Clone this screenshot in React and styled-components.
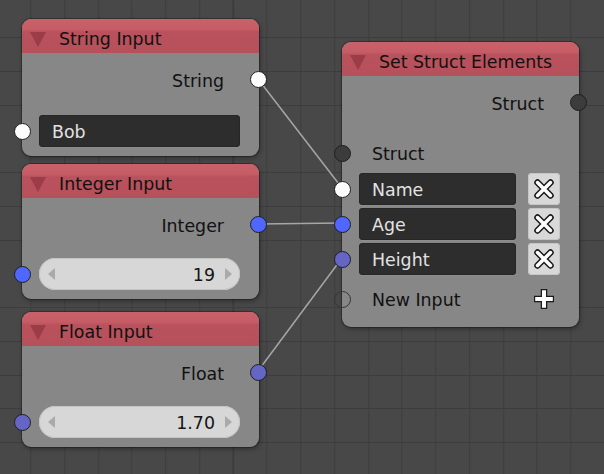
import React from "react";
import styled, { createGlobalStyle } from "styled-components";

const Global = createGlobalStyle`
  html, body {
    margin: 0;
    padding: 0;
    background: #484848;
  }
  body {
    font-family: "DejaVu Sans", "Liberation Sans", sans-serif;
  }
`;

const Canvas = styled.div`
  position: relative;
  width: 604px;
  height: 474px;
  overflow: hidden;
  background-color: #484848;
  background-image:
    repeating-linear-gradient(90deg, transparent 0, transparent 32px, #3d3d3d 32px, #3d3d3d 33px, transparent 33px, transparent 33.75px),
    repeating-linear-gradient(0deg, transparent 0, transparent 32.75px, #3d3d3d 32.75px, #3d3d3d 33.75px);
  background-position: -1.75px 0, 0 2px;
`;

const Links = styled.svg`
  position: absolute;
  left: 0;
  top: 0;
  width: 604px;
  height: 474px;
`;

const Node = styled.div`
  position: absolute;
  left: ${p => p.$x}px;
  top: ${p => p.$y}px;
  width: 237px;
  border-radius: 9px;
  background: #878787;
  box-shadow: 0 0 0 1px rgba(0, 0, 0, 0.28), 1px 2px 5px rgba(0, 0, 0, 0.35);
`;

const Header = styled.div`
  display: flex;
  align-items: center;
  gap: 13px;
  height: 34px;
  padding: 6px 0 0 8px;
  box-sizing: border-box;
  border-radius: 9px 9px 0 0;
  background: linear-gradient(#c9616b 0%, #c55c66 30%, #b9525c 38%, #b6505a 100%);
  color: #111;
  font-size: 17.4px;
`;

const Collapse = styled.span`
  width: 0;
  height: 0;
  margin-top: 1px;
  border-left: 8px solid transparent;
  border-right: 8px solid transparent;
  border-top: 15px solid #9c3c46;
`;

const Body = styled.div`
  display: flex;
  flex-direction: column;
  padding: 8px 0 ${p => p.$bottom || 9}px;
`;

const Row = styled.div`
  position: relative;
  display: flex;
  align-items: center;
  justify-content: ${p => (p.$out ? "flex-end" : "flex-start")};
  height: ${p => p.$h || 36}px;
  margin-top: ${p => p.$mt || 0}px;
  padding: ${p => (p.$out ? "0 35px 0 0" : "0 19px 0 17px")};
  gap: 12px;
  font-size: 17.4px;
  color: #111;
`;

const Label = styled.span`
  padding-left: ${p => p.$indent || 0}px;
  padding-top: ${p => (p.$right ? 4 : 1)}px;
  flex: 1;
  text-align: ${p => (p.$right ? "right" : "left")};
`;

const Socket = styled.span`
  position: absolute;
  top: 50%;
  ${p => (p.$side === "right" ? "right: -8px;" : "left: -8px;")}
  width: 17px;
  height: 17px;
  margin-top: -8.5px;
  box-sizing: border-box;
  border-radius: 50%;
  border: 1px solid ${p => (p.$hollow ? "#353535" : "#1f1f1f")};
  background: ${p => p.$color || "transparent"};
`;

const TextField = styled.div`
  flex: 1;
  height: 32px;
  display: flex;
  align-items: center;
  padding: 2px 0 0 13px;
  box-sizing: border-box;
  border-radius: 4px;
  background: #2d2d2d;
  box-shadow: inset 0 0 0 1px #262626, 0 1px 0 rgba(255, 255, 255, 0.06);
  color: #e2e2e2;
  font-size: 17.4px;
`;

const Slider = styled.div`
  flex: 1;
  height: 32px;
  display: flex;
  align-items: center;
  padding: 0 8px 0 9px;
  box-sizing: border-box;
  border-radius: 16px;
  background: #d7d7d7;
  box-shadow: inset 0 0 0 1px #c4c4c4;
  color: #141414;
  font-size: 17.4px;
`;

const Arrow = styled.span`
  width: 0;
  height: 0;
  border-top: 6px solid transparent;
  border-bottom: 6px solid transparent;
  ${p => (p.$dir === "left" ? "border-right: 7px solid #aaaaaa;" : "border-left: 7px solid #aaaaaa;")}
`;

const Value = styled.span`
  flex: 1;
  text-align: right;
  padding: 2px 10px 0 0;
`;

const RemoveButton = styled.div`
  width: 32px;
  height: 32px;
  display: flex;
  align-items: center;
  justify-content: center;
  border-radius: 4px;
  background: #d8d8d8;
  box-shadow: inset 0 0 0 1px #c6c6c6;
`;

const AddButton = styled.div`
  width: 32px;
  height: 32px;
  display: flex;
  align-items: center;
  justify-content: center;
`;

const FieldList = styled.div`
  display: flex;
  flex-direction: column;
  gap: 3px;
  margin-top: 2px;
`;

const CrossIcon = () => (
  <svg width="22" height="22" viewBox="0 0 22 22">
    <path d="M4.5 4.5 L17.5 17.5 M17.5 4.5 L4.5 17.5" stroke="#1a1a1a" strokeWidth="6.5" strokeLinecap="round" />
    <path d="M4.5 4.5 L17.5 17.5 M17.5 4.5 L4.5 17.5" stroke="#ffffff" strokeWidth="3.5" strokeLinecap="round" />
  </svg>
);

const PlusIcon = () => (
  <svg width="22" height="22" viewBox="0 0 22 22">
    <path d="M11 1 V21 M1 11 H21" stroke="#1a1a1a" strokeWidth="6.5" />
    <path d="M11 2.2 V19.8 M2.2 11 H19.8" stroke="#ffffff" strokeWidth="4" />
  </svg>
);

const WHITE = "#ffffff";
const BLUE = "#4f67ff";
const PURPLE = "#6565c6";
const DARK = "#3c3c3c";

const InputNode = ({ x, y, title, output, color, gap, children }) => (
  <Node $x={x} $y={y}>
    <Header>
      <Collapse />
      {title}
    </Header>
    <Body>
      <Row $out>
        <Label $right>{output}</Label>
        <Socket $side="right" $color={color} />
      </Row>
      <Row $h={32} $mt={gap}>
        <Socket $color={color} />
        {children}
      </Row>
    </Body>
  </Node>
);

const NumberSlider = ({ value }) => (
  <Slider>
    <Arrow $dir="left" />
    <Value>{value}</Value>
    <Arrow $dir="right" />
  </Slider>
);

const fields = [
  { name: "Name", color: WHITE },
  { name: "Age", color: BLUE },
  { name: "Height", color: PURPLE },
];

export default function App() {
  return (
    <>
      <Global />
      <Canvas>
        <Links viewBox="0 0 604 474">
          <g stroke="#a6a6a6" strokeWidth="1.5" fill="none">
            <line x1="258" y1="79" x2="342" y2="188" />
            <line x1="258" y1="224" x2="342" y2="223" />
            <line x1="258" y1="371" x2="342" y2="258" />
          </g>
        </Links>

        <InputNode x={22} y={19} title="String Input" output="String" color={WHITE} gap={18}>
          <TextField>Bob</TextField>
        </InputNode>

        <InputNode x={22} y={164} title="Integer Input" output="Integer" color={BLUE} gap={16}>
          <NumberSlider value="19" />
        </InputNode>

        <InputNode x={22} y={312} title="Float Input" output="Float" color={PURPLE} gap={16}>
          <NumberSlider value="1.70" />
        </InputNode>

        <Node $x={342} $y={42}>
          <Header>
            <Collapse />
            Set Struct Elements
          </Header>
          <Body $bottom={10}>
            <Row $out>
              <Label $right>Struct</Label>
              <Socket $side="right" $color={DARK} />
            </Row>
            <Row $mt={15}>
              <Socket $color={DARK} />
              <Label $indent={13}>Struct</Label>
            </Row>
            <FieldList>
              {fields.map(f => (
                <Row key={f.name} $h={32}>
                  <Socket $color={f.color} />
                  <TextField>{f.name}</TextField>
                  <RemoveButton>
                    <CrossIcon />
                  </RemoveButton>
                </Row>
              ))}
            </FieldList>
            <Row $mt={6}>
              <Socket $hollow />
              <Label $indent={13}>New Input</Label>
              <AddButton>
                <PlusIcon />
              </AddButton>
            </Row>
          </Body>
        </Node>
      </Canvas>
    </>
  );
}
